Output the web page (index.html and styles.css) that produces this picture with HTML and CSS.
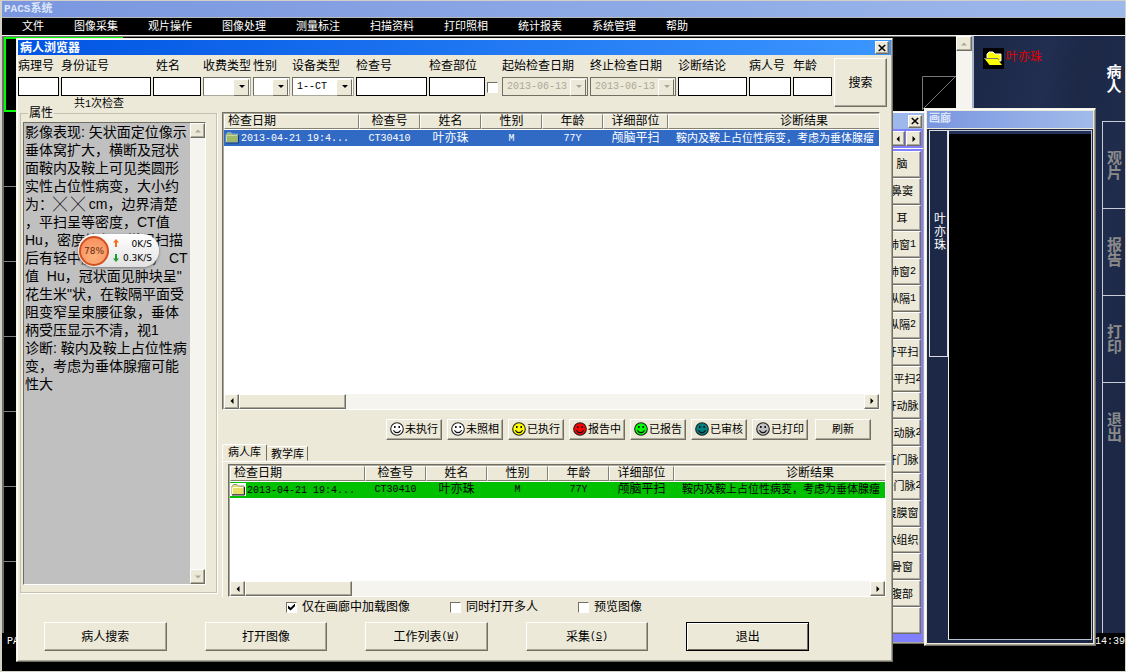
FILE: index.html
```html
<!DOCTYPE html>
<html lang="zh-CN">
<head>
<meta charset="utf-8">
<title>PACS系统</title>
<link rel="stylesheet" href="styles.css">
</head>
<body>
<svg class="defs" aria-hidden="true">
  <symbol id="smile" viewBox="0 0 14 14">
    <circle cx="7" cy="7" r="6.3" stroke="#222" stroke-width="1.1"/>
    <rect x="4" y="4" width="1.6" height="2" fill="#111"/>
    <rect x="8.4" y="4" width="1.6" height="2" fill="#111"/>
    <path d="M3.4 8.2 Q4.6 10.6 7 10.6 Q9.4 10.6 10.6 8.2" fill="none" stroke="#111" stroke-width="1.1"/>
  </symbol>
  <symbol id="folder" viewBox="0 0 14 12">
    <path d="M1 11 V3 L2.5 1 H6 L7.5 2.5 H13 V11 Z" fill="#e6e06a" stroke="#8f8f8f"/>
    <path d="M1.5 10.5 V4 H12" fill="none" stroke="#fffbd0"/>
    <path d="M1 11.5 H13.5 V3.5" fill="none" stroke="#222"/>
  </symbol>
  <symbol id="folder-sel" viewBox="0 0 14 12">
    <path d="M1 11 V3 L2.5 1 H6 L7.5 2.5 H13 V11 Z" fill="#9fb86a" stroke="#7f9fd0"/>
    <path d="M1.5 10.5 V4 H12" fill="none" stroke="#c8d8a0"/>
    <path d="M1 11.5 H13.5 V3.5" fill="none" stroke="#1c3c70"/>
  </symbol>
  <symbol id="left" viewBox="0 0 8 8"><path d="M5.5 1 V7 L2.5 4 Z"/></symbol>
  <symbol id="right" viewBox="0 0 8 8"><path d="M2.5 1 V7 L5.5 4 Z"/></symbol>
  <symbol id="up" viewBox="0 0 8 8"><path d="M1 5.5 H7 L4 2.5 Z"/></symbol>
  <symbol id="down" viewBox="0 0 8 8"><path d="M1 2.5 H7 L4 5.5 Z"/></symbol>
  <symbol id="cross" viewBox="0 0 8 8"><path d="M0.8 1 L7.2 7 M7.2 1 L0.8 7" stroke="#000" stroke-width="1.6"/></symbol>
</svg>

<div class="app">
  <header class="app-title"><span class="num">PACS</span>系统</header>
  <nav class="menu">
    <button>文件</button><button>图像采集</button><button>观片操作</button><button>图像处理</button><button>测量标注</button><button>扫描资料</button><button>打印照相</button><button>统计报表</button><button>系统管理</button><button>帮助</button>
  </nav>

  <main class="work">
    <section class="viewer">
      <div class="pane pane-on"></div><div class="pane"></div><div class="pane"></div><div class="pane"></div><div class="pane"></div><div class="pane"></div><div class="pane"></div><div class="pane"></div>
      <svg class="thumb-box" viewBox="0 0 34 34"><path d="M.5 34 V.5 H34 M1 33 L33 1" fill="none" stroke="#777"/></svg>
    </section>
    <div class="vbar"><button class="sb" aria-label="上"><svg class="ar dim"><use href="#up"/></svg></button></div>
    <aside class="side">
      <div class="patient">
        <svg class="patient-icon" viewBox="0 0 21 21"><rect width="21" height="21" fill="#000"/><path d="M4 10 V6 L6 4 H10 L12 6 H18 V13 H4 Z" fill="#ff0" stroke="#fff"/><path d="M1.5 10.5 H14 L19 17 H6.5 Z" fill="#ff0"/><path d="M1 10.5 H15 L16 12" fill="none" stroke="#777"/></svg>
        <span>叶亦珠</span>
      </div>
      <div class="side-tabs">
        <button class="on">病人</button><button>观片</button><button>报告</button><button>打印</button><button>退出</button>
      </div>
    </aside>
  </main>
  <footer class="status"><span>PACS</span><span>14:39</span></footer>

  <section class="win tools">
    <header class="tools-title"><button class="close" aria-label="关闭"><svg class="ar"><use href="#cross"/></svg></button></header>
    <div class="tools-nav"><button class="sb" aria-label="前"><svg class="ar"><use href="#left"/></svg></button><button class="sb" aria-label="后"><svg class="ar"><use href="#right"/></svg></button></div>
    <div class="tools-list">
      <button>脑</button><button>鼻窦</button><button>耳</button><button>肺窗<span class="num">1</span></button><button>肺窗<span class="num">2</span></button><button>纵隔<span class="num">1</span></button><button>纵隔<span class="num">2</span></button><button>肝平扫</button><button>肝平扫<span class="num">2</span></button><button>肝动脉</button><button>肝动脉<span class="num">2</span></button><button>肝门脉</button><button>肝门脉<span class="num">2</span></button><button>腹膜窗</button><button>软组织</button><button>骨窗</button><button>腹部</button><button aria-label="空"></button>
    </div>
  </section>

  <section class="win gallery">
    <header class="gallery-title">画廊</header>
    <div class="gallery-body">
      <button class="gallery-tab">叶亦珠</button>
      <div class="gallery-canvas"></div>
    </div>
  </section>

  <section class="win dialog">
    <header class="dialog-title"><h1>病人浏览器</h1><button class="close" aria-label="关闭"><svg class="ar"><use href="#cross"/></svg></button></header>

    <form class="search">
      <div class="field"><label for="f1">病理号</label><input id="f1"></div>
      <div class="field"><label for="f2">身份证号</label><input id="f2"></div>
      <div class="field"><label for="f3">姓名</label><input id="f3"></div>
      <div class="field"><label for="f4">收费类型</label><span class="pick"><select id="f4"><option></option></select></span></div>
      <div class="field"><label for="f5">性别</label><span class="pick"><select id="f5"><option></option></select></span></div>
      <div class="field"><label for="f6">设备类型</label><span class="pick"><select id="f6"><option>1--CT</option></select></span></div>
      <div class="field"><label for="f7">检查号</label><input id="f7"></div>
      <div class="field"><label for="f8">检查部位</label><input id="f8"></div>
      <div class="field field-check"><input type="checkbox" aria-label="按日期"></div>
      <div class="field"><label for="f9">起始检查日期</label><span class="pick flat"><select id="f9" disabled><option>2013-06-13</option></select></span></div>
      <div class="field"><label for="f10">终止检查日期</label><span class="pick flat"><select id="f10" disabled><option>2013-06-13</option></select></span></div>
      <div class="field"><label for="f11">诊断结论</label><input id="f11"></div>
      <div class="field"><label for="f12">病人号</label><input id="f12"></div>
      <div class="field"><label for="f13">年龄</label><input id="f13"></div>
      <button type="button" class="btn search-btn">搜索</button>
      <output class="count">共<span class="num">1</span>次检查</output>
    </form>

    <div class="middle">
      <fieldset class="props">
        <legend>属性</legend>
        <div class="report">
          <textarea aria-label="属性" readonly wrap="off">影像表现: 矢状面定位像示
垂体窝扩大，横断及冠状
面鞍内及鞍上可见类圆形
实性占位性病变，大小约
为：╳ ╳ cm，边界清楚
，平扫呈等密度，CT值
Hu，密度均匀，增强扫描
后有轻中度均匀强化， CT
值  Hu，冠状面见肿块呈"
花生米"状，在鞍隔平面受
阻变窄呈束腰征象，垂体
柄受压显示不清，视1
诊断: 鞍内及鞍上占位性病
变，考虑为垂体腺瘤可能
性大</textarea>
          <div class="vscroll"><button class="sb" aria-label="上"><svg class="ar dim"><use href="#up"/></svg></button><button class="sb" aria-label="下"><svg class="ar dim"><use href="#down"/></svg></button></div>
        </div>
      </fieldset>

      <div class="lists">
        <div class="list list-a">
          <div class="list-view">
            <table>
              <colgroup><col class="c-date"><col class="c-s"><col class="c-s"><col class="c-s"><col class="c-s"><col class="c-part"><col class="c-res"></colgroup>
              <thead><tr><th>检查日期</th><th>检查号</th><th>姓名</th><th>性别</th><th>年龄</th><th>详细部位</th><th>诊断结果</th></tr></thead>
              <tbody><tr class="sel"><td><svg class="fold"><use href="#folder-sel"/></svg><span class="num">2013-04-21 19:4...</span></td><td class="num">CT30410</td><td>叶亦珠</td><td class="num">M</td><td class="num">77Y</td><td>颅脑平扫</td><td>鞍内及鞍上占位性病变，考虑为垂体腺瘤</td></tr></tbody>
            </table>
          </div>
          <div class="hscroll"><button class="sb" aria-label="左"><svg class="ar"><use href="#left"/></svg></button><div class="thumb"></div><button class="sb" aria-label="右"><svg class="ar"><use href="#right"/></svg></button></div>
        </div>

        <div class="states">
          <button class="btn"><svg class="face" fill="#fff"><use href="#smile"/></svg>未执行</button>
          <button class="btn"><svg class="face" fill="#fff"><use href="#smile"/></svg>未照相</button>
          <button class="btn"><svg class="face" fill="#ff0"><use href="#smile"/></svg>已执行</button>
          <button class="btn"><svg class="face" fill="#f00"><use href="#smile"/></svg>报告中</button>
          <button class="btn"><svg class="face" fill="#0f0"><use href="#smile"/></svg>已报告</button>
          <button class="btn"><svg class="face" fill="#008080"><use href="#smile"/></svg>已审核</button>
          <button class="btn"><svg class="face" fill="#c0c0c0"><use href="#smile"/></svg>已打印</button>
          <button class="btn">刷新</button>
        </div>

        <div class="tabs"><button class="tab on">病人库</button><button class="tab">教学库</button></div>
        <div class="page">
          <div class="list">
            <div class="list-view">
              <table>
                <colgroup><col class="c-date"><col class="c-s"><col class="c-s"><col class="c-s"><col class="c-s"><col class="c-part"><col class="c-res"></colgroup>
                <thead><tr><th>检查日期</th><th>检查号</th><th>姓名</th><th>性别</th><th>年龄</th><th>详细部位</th><th>诊断结果</th></tr></thead>
                <tbody><tr class="green"><td><svg class="fold"><use href="#folder"/></svg><span class="num">2013-04-21 19:4...</span></td><td class="num">CT30410</td><td>叶亦珠</td><td class="num">M</td><td class="num">77Y</td><td>颅脑平扫</td><td>鞍内及鞍上占位性病变，考虑为垂体腺瘤</td></tr></tbody>
              </table>
            </div>
            <div class="hscroll"><button class="sb" aria-label="左"><svg class="ar"><use href="#left"/></svg></button><div class="thumb"></div><button class="sb" aria-label="右"><svg class="ar"><use href="#right"/></svg></button></div>
          </div>
        </div>
      </div>
    </div>

    <div class="options">
      <label><input type="checkbox" checked>仅在画廊中加载图像</label>
      <label><input type="checkbox">同时打开多人</label>
      <label><input type="checkbox">预览图像</label>
    </div>
    <div class="actions">
      <button class="btn">病人搜索</button>
      <button class="btn">打开图像</button>
      <button class="btn">工作列表<span class="num">(<u>W</u>)</span></button>
      <button class="btn">采集<span class="num">(<u>S</u>)</span></button>
      <button class="btn default">退出</button>
    </div>
  </section>

  <div class="meter">
    <div class="meter-pct">78%</div>
    <svg class="meter-arrows" viewBox="0 0 6 24"><path d="M3 0 L6 3.5 H4 V8 H2 V3.5 H0 Z" fill="#f26a1b"/><path d="M3 23 L6 19.5 H4 V15 H2 V19.5 H0 Z" fill="#1d9a2f"/></svg>
    <div class="meter-rate"><span>0K/S</span><span>0.3K/S</span></div>
  </div>
</div>
</body>
</html>
```

FILE: styles.css
```css
* { box-sizing: border-box; }

html, body { height: 100%; margin: 0; }

body, button, input, select {
  font-family: "Liberation Sans", "Noto Sans CJK SC", sans-serif;
  font-size: 12px;
  line-height: 14px;
  color: #000;
}

button { margin: 0; padding: 0; border: 0; background: none; white-space: nowrap; }

.defs { position: absolute; width: 0; height: 0; }

.num { font-family: "Liberation Mono", "Noto Sans CJK SC", monospace; font-size: 10px; }

.app {
  position: relative;
  display: flex;
  flex-direction: column;
  height: 100%;
  min-height: 600px;
  overflow: hidden;
  background: #000;
  border: 1px solid #d4d0c8;
  border-left-width: 2px;
}

.app-title {
  height: 17px;
  padding-left: 2px;
  border-bottom: 1px solid #b8b8b8;
  background: linear-gradient(90deg, #7a96df, #9db9eb);
  color: #dce6fa;
  font-size: 11px;
  font-weight: bold;
  line-height: 15px;
}
.app-title .num { font-size: 11px; }

.menu {
  display: flex;
  gap: 30px;
  height: 17px;
  padding-left: 20px;
}
.menu button { color: #fff; font-size: 11px; line-height: 15px; }

.work {
  flex: 1;
  display: flex;
  min-height: 0;
  border-top: 1px solid #f0f0f0;
}

.viewer {
  position: relative;
  flex: 1;
  overflow: hidden;
  border-left: 2px solid #6e6e6e;
  border-top: 1px solid #777;
}
.pane { height: 75px; border-bottom: 1px solid #808080; }
.pane-on { width: 119px; border: 2px solid #0f0; border-right: 0; }
.thumb-box { position: absolute; right: 0; top: 39px; width: 34px; height: 34px; }

.vbar { width: 16px; background: #f5f4ee; }

.side {
  display: flex;
  justify-content: space-between;
  width: 153px;
  border-left: 2px solid #a9b3c8;
  background: linear-gradient(100deg, #1c2846, #222e50 30%, #1c2846 45%, #202c4c 65%, #1c2846 80%);
}
.patient { display: flex; align-items: flex-start; gap: 2px; padding: 12px 0 0 9px; color: #e00000; line-height: 18px; }
.patient-icon { width: 21px; height: 21px; }
.side-tabs { display: grid; grid-template-rows: 85px 87px 87px 87px 1fr; width: 23px; }
.side-tabs button {
  padding: 0 4px;
  border-left: 1px solid #c8ccd6;
  border-top: 1px solid #c8ccd6;
  color: #8a8a8a;
  font-size: 15px;
  font-weight: bold;
  line-height: 15px;
  white-space: normal;
  overflow-wrap: anywhere;
}
.side-tabs button.on { border: 0; color: #fff; }
.side-tabs button:last-child { padding-bottom: 162px; }

.status {
  display: flex;
  justify-content: space-between;
  height: 38px;
  padding: 2px 0 0 5px;
  color: #fff;
  font-family: "Liberation Mono", monospace;
  font-size: 10px;
}

/* windows */
.win {
  position: absolute;
  display: flex;
  flex-direction: column;
  background: #ece9d8;
  border: 1px solid;
  border-color: #f4f2e8 #716f64 #716f64 #f4f2e8;
  box-shadow: inset 1px 1px #fff, inset -1px -1px #aca899;
}

.sb, .close, .btn, .tools-list button, .thumb {
  background: #ece9d8;
  border: 1px solid;
  border-color: #fff #716f64 #716f64 #fff;
  box-shadow: inset -1px -1px #aca899;
}
.sb { display: flex; align-items: center; justify-content: center; width: 15px; height: 15px; flex: none; }
.vbar .sb { width: 16px; }
.close { display: flex; align-items: center; justify-content: center; width: 14px; height: 13px; }
.ar { width: 8px; height: 8px; }
.dim { fill: #aca899; }

/* tool palette */
.tools { right: 200px; top: 110px; bottom: 27px; width: 44px; padding: 1px; }
.tools-title { display: flex; align-items: center; justify-content: flex-end; height: 16px; padding-right: 1px; background: #9db9eb; }
.tools-nav { display: flex; justify-content: flex-end; gap: 1px; height: 20px; padding: 2px 2px 0 0; background: #8080ff; border-bottom: 1px solid #fff; }
.tools-list { flex: 1; display: flex; flex-direction: column; padding: 2px 2px 8px 0; background: #8080ff; }
.tools-list button { flex: 1; display: flex; align-items: center; justify-content: center; font-size: 11px; overflow: hidden; }

/* gallery */
.gallery { right: 29px; top: 107px; bottom: 25px; width: 172px; padding: 2px; }
.gallery-title { height: 17px; padding-left: 2px; background: linear-gradient(90deg, #7a96df, #a2bbeb); color: #dce6fa; font-size: 11px; font-weight: bold; line-height: 15px; }
.gallery-body { flex: 1; display: flex; align-items: flex-start; margin-top: 1px; padding: 1px 1px 3px 2px; background: #1c2846; }
.gallery-tab {
  width: 19px;
  height: 227px;
  padding: 0 0 22px 4px;
  border: 1px solid #d8dce6;
  color: #fff;
  line-height: 13px;
  text-align: left;
  white-space: normal;
  overflow-wrap: anywhere;
}
.gallery-canvas { flex: 1; align-self: stretch; border: 1px solid #b8c0d4; border-left-color: #eee; background: linear-gradient(#243154 3px, #000 3px); }

/* patient browser */
.dialog { left: 14px; right: 232px; top: 37px; bottom: 9px; padding: 1px; }
.dialog-title { display: flex; align-items: center; justify-content: space-between; height: 15px; padding: 0 2px; background: linear-gradient(90deg, #0054e3, #3c96ff); }
.dialog-title h1 { margin: 0; color: #fff; font-size: 12px; line-height: 14px; }

.search {
  display: grid;
  grid-template-columns: 43fr 92fr 50fr 50fr 39fr 64fr 73fr 58fr 15fr 88fr 88fr 71fr 44fr 41fr 53fr;
  grid-template-rows: 54px auto;
  padding: 0 4px 0 0;
}
.field { display: flex; flex-direction: column; justify-content: flex-end; gap: 4px; min-width: 0; padding: 0 2px 13px 0; }
.field label { white-space: nowrap; }
.field:nth-child(3) label { padding-left: 3px; }
.field input:not([type]) { width: 100%; height: 19px; padding: 0 2px; border: 1px solid #000; background: #fff; }
.field-check { padding-bottom: 16px; }
.pick { position: relative; display: block; }
.pick select {
  appearance: none;
  display: block;
  width: 100%;
  height: 19px;
  padding: 0 0 0 4px;
  border: 1px solid;
  border-color: #716f64 #aca899 #aca899 #716f64;
  border-radius: 0;
  background: #fff;
  font-family: "Liberation Mono", monospace;
  font-size: 10px;
}
.pick select:disabled { border: 1px solid #716f64; background: #ece9d8; color: #aca899; opacity: 1; }
.pick::before {
  content: "";
  position: absolute;
  z-index: 1;
  right: 2px;
  top: 2px;
  width: 14px;
  height: 15px;
  border: 1px solid;
  border-color: #fff #716f64 #716f64 #fff;
  background: #ece9d8;
  pointer-events: none;
}
.pick::after {
  content: "";
  position: absolute;
  z-index: 2;
  right: 6px;
  top: 8px;
  border: 3px solid transparent;
  border-top-color: #000;
  pointer-events: none;
}
.pick.flat::after { border-top-color: #aca899; }
.search-btn { grid-column: 15; grid-row: 1; height: 49px; margin-top: 3px; }
.count { grid-row: 2; grid-column: 2 / 5; height: 14px; margin: -13px 0 2px 13px; font-size: 11px; }

input[type="checkbox"] {
  appearance: none;
  position: relative;
  width: 11px;
  height: 11px;
  margin: 0;
  border: 1px solid;
  border-color: #716f64 #fff #fff #716f64;
  background: #fff;
}
input[type="checkbox"]:checked::after {
  content: "";
  position: absolute;
  left: 1px;
  top: 1px;
  width: 7px;
  height: 7px;
  background: #000;
  clip-path: polygon(0 30%, 38% 60%, 100% 0, 100% 40%, 38% 100%, 0 70%);
}

.middle { flex: 1; display: flex; gap: 5px; min-height: 0; padding-left: 2px; }

.props {
  display: flex;
  flex-direction: column;
  width: 197px;
  flex: none;
  min-width: 0;
  margin: -6px 0 4px;
  padding: 2px 10px 7px 2px;
  border: 1px solid #c5c2b2;
  box-shadow: 1px 1px #fff;
}
.props legend { margin-left: 5px; padding: 0 1px; font-size: 12px; line-height: 14px; }
.report { flex: 1; display: flex; height: 100%; border: 1px solid; border-color: #716f64 #fff #fff #716f64; }
.report textarea {
  flex: 1;
  min-width: 0;
  margin: 0;
  padding: 0 0 0 1px;
  border: 0;
  resize: none;
  overflow: hidden;
  background: #c0c0c0;
  color: #000;
  font-family: "Liberation Sans", "Noto Sans CJK SC", sans-serif;
  font-size: 14px;
  line-height: 18px;
  white-space: pre;
}
.vscroll { display: flex; flex-direction: column; justify-content: space-between; width: 15px; background: #f5f4ee; }

.lists { flex: 1; display: flex; flex-direction: column; min-width: 0; }
.list { flex: 1; display: flex; flex-direction: column; min-width: 0; min-height: 0; border: 1px solid; border-color: #716f64 #fff #fff #716f64; box-shadow: inset 1px 1px #aca899; padding: 1px 0 0 1px; background: #fff; }
.list-a { flex: 299 1 0; margin-right: 11px; }
.list-view { flex: 1; min-height: 0; overflow: hidden; }
.list table { width: 716px; table-layout: fixed; border-collapse: separate; border-spacing: 0; }
.c-date { width: 135px; }
.c-s { width: 61px; }
.c-part { width: 65px; }
.c-res { width: 272px; }
.list th {
  height: 15px;
  padding: 0;
  border: 1px solid;
  border-color: #fff #858170 #858170 #fff;
  background: #ece9d8;
  font-weight: normal;
  line-height: 13px;
}
.list th:first-child { padding-left: 3px; text-align: left; }
.list td { height: 16px; padding: 0; overflow: hidden; line-height: 15px; text-align: center; white-space: nowrap; background-clip: padding-box; border-top: 1px solid #fff; }
.list td:first-child { text-align: left; }
.list td:last-child { padding-left: 8px; text-align: left; font-size: 11px; }
.sel td { background-color: #316ac5; color: #fff; }
.green td { background-color: #00c000; }
.fold { display: inline-block; width: 16px; height: 13px; margin-right: 1px; padding: 0 1px; vertical-align: middle; }
.green .fold { background: #fff; }
.hscroll { display: flex; height: 15px; background: #f5f4ee; }
.hscroll .sb:last-child { margin-left: auto; }
.thumb { width: 107px; }

.states { display: flex; justify-content: flex-end; gap: 5px; margin: 9px 20px 4px 0; }
.btn { display: flex; align-items: center; justify-content: center; }
.states .btn { width: 56px; height: 21px; gap: 1px; font-size: 11px; }
.states .btn:last-child { margin-left: 2px; }
.face { width: 14px; height: 14px; flex: none; }

.tabs { display: flex; align-items: flex-end; height: 17px; }
.tab { height: 15px; padding: 0 3px; border: 1px solid; border-color: #fff #716f64 transparent transparent; font-size: 11px; line-height: 14px; }
.tab.on { height: 17px; padding: 0 5px; border-left-color: #fff; border-radius: 3px 2px 0 0; }
.page { flex: 135 1 0; display: flex; min-height: 0; padding: 2px 5px 0 5px; border-top: 1px solid #fff; border-left: 1px solid #fff; }

.options { display: flex; height: 20px; align-items: center; padding-left: 268px; gap: 40px; }
.options label { display: flex; align-items: center; gap: 5px; }
.actions { display: grid; grid-template-columns: repeat(5, 1fr); gap: 38px; padding: 5px 82px 9px 26px; }
.actions .btn { height: 29px; }
.actions .default { border-color: #000; box-shadow: inset 1px 1px #fff, inset -1px -1px #716f64; }

/* network meter */
.meter {
  position: absolute;
  left: 76px;
  top: 233px;
  display: flex;
  align-items: center;
  gap: 4px;
  width: 81px;
  height: 33px;
  padding: 0 8px 0 1px;
  border-radius: 16px;
  background: linear-gradient(#fff, #e2e2e2);
  box-shadow: 0 1px 3px #777;
}
.meter-pct {
  flex: none;
  width: 30px;
  height: 30px;
  border: 2px solid #d2501e;
  border-radius: 50%;
  background: radial-gradient(circle at 50% 70%, #ffb27c, #f58a5a);
  color: #6a2a10;
  font: 9px/26px "DejaVu Sans", sans-serif;
  text-align: center;
}
.meter-arrows { flex: none; width: 6px; height: 24px; }
.meter-rate { flex: 1; display: flex; flex-direction: column; text-align: right; font: 9px/14px "DejaVu Sans", sans-serif; }
```
